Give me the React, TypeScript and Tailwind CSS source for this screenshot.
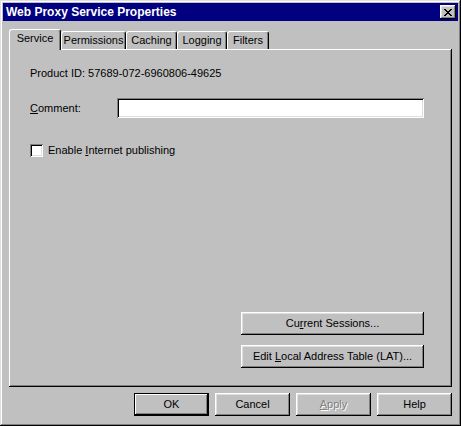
import React, { useState } from 'react';

const raised =
  'shadow-[inset_-1px_-1px_#000,inset_1px_1px_#fff,inset_-2px_-2px_#808080,inset_2px_2px_#dfdfdf]';

const tabs = [
  { id: 'service', label: 'Service', width: 'w-[52px]' },
  { id: 'permissions', label: 'Permissions', width: 'w-[65px]' },
  { id: 'caching', label: 'Caching', width: 'w-[51px]' },
  { id: 'logging', label: 'Logging', width: 'w-[50px]' },
  { id: 'filters', label: 'Filters', width: 'w-[42px]' },
];

function Button({
  children,
  className = '',
  isDefault = false,
  disabled = false,
}: {
  children: React.ReactNode;
  className?: string;
  isDefault?: boolean;
  disabled?: boolean;
}) {
  return (
    <button
      className={`flex h-[23px] items-center justify-center bg-[#c0c0c0] text-[11px] ${
        isDefault
          ? 'shadow-[inset_0_0_0_1px_#000,inset_-2px_-2px_#000,inset_2px_2px_#fff,inset_-3px_-3px_#808080]'
          : raised
      } ${disabled ? 'text-[#808080] [text-shadow:1px_1px_#fff]' : 'text-black'} ${className}`}
    >
      <span className="whitespace-pre">{children}</span>
    </button>
  );
}

export default function App() {
  const [active, setActive] = useState('service');
  const [internet, setInternet] = useState(false);

  return (
    <div
      className="flex h-[426px] w-[461px] flex-col bg-[#c0c0c0] p-[3px] text-[11px] text-black shadow-[inset_-1px_-1px_#000,inset_1px_1px_#dfdfdf,inset_-2px_-2px_#808080,inset_2px_2px_#fff]"
      style={{ fontFamily: '"Liberation Sans", Arial, sans-serif' }}
    >
      {/* Title bar */}
      <div className="flex h-[18px] items-center justify-between bg-[#000080] pl-[3px] pr-[2px]">
        <span className="text-[12px] font-bold text-white">Web Proxy Service Properties</span>
        <button className={`flex h-[14px] w-[16px] items-center justify-center bg-[#c0c0c0] ${raised}`}>
          <svg width="8" height="7" viewBox="0 0 8 7" shapeRendering="crispEdges">
            <path
              d="M0 0h2v1H0zM6 0h2v1H6zM1 1h2v1H1zM5 1h2v1H5zM2 2h4v1H2zM3 3h2v1H3zM2 4h4v1H2zM1 5h2v1H1zM5 5h2v1H5zM0 6h2v1H0zM6 6h2v1H6z"
              fill="#000"
            />
          </svg>
        </button>
      </div>

      {/* Tabs */}
      <div className="mt-[8px] flex h-[20px] items-end pl-[6px]">
        {tabs.map((tab) => {
          const selected = tab.id === active;
          return (
            <button
              key={tab.id}
              onClick={() => setActive(tab.id)}
              className={`relative flex items-start justify-center rounded-t-[3px] border-l border-t border-r border-white border-r-black bg-[#c0c0c0] shadow-[inset_-1px_0_#808080] ${tab.width} ${
                selected ? 'z-10 -mb-px h-[21px] pt-[2px]' : 'h-[18px] pt-[2px]'
              }`}
            >
              <span className="leading-[13px]">{tab.label}</span>
            </button>
          );
        })}
      </div>

      {/* Tab panel */}
      <div className="mx-[6px] flex h-[338px] flex-col pb-[19px] pl-[21px] pr-[28px] shadow-[inset_-1px_-1px_#000,inset_1px_1px_#fff,inset_-2px_-2px_#808080]">
        <div className="mt-[18px] h-[13px] leading-[13px]">Product ID: 57689-072-6960806-49625</div>

        <div className="mt-[18px] flex h-[20px] items-center">
          <label className="w-[87px] leading-[13px]">
            <span className="underline">C</span>omment:
          </label>
          <input
            className="h-[20px] w-[307px] bg-white px-[3px] text-[11px] outline-none shadow-[inset_1px_1px_#808080,inset_-1px_-1px_#fff,inset_2px_2px_#000,inset_-2px_-2px_#dfdfdf]"
          />
        </div>

        <label className="mt-[26px] flex h-[13px] items-center" onClick={() => setInternet(!internet)}>
          <span className="flex h-[13px] w-[13px] items-center justify-center bg-white shadow-[inset_1px_1px_#808080,inset_-1px_-1px_#fff,inset_2px_2px_#000,inset_-2px_-2px_#dfdfdf]">
            {internet && (
              <svg width="7" height="7" viewBox="0 0 7 7">
                <path d="M0 3l2 2 5-5v2l-5 5-2-2z" fill="#000" />
              </svg>
            )}
          </span>
          <span className="ml-[5px] leading-[13px]">
            Enable <span className="underline">I</span>nternet publishing
          </span>
        </label>

        <div className="flex-1" />

        <div className="flex flex-col items-end gap-[10px]">
          <Button className="w-[183px]">
            Cu<span className="underline">r</span>rent Sessions...
          </Button>
          <Button className="w-[183px]">
            Edit <span className="underline">L</span>ocal Address Table (LAT)...
          </Button>
        </div>
      </div>

      {/* Dialog buttons */}
      <div className="mt-[6px] flex justify-end gap-[6px] pr-[6px]">
        <Button className="w-[75px]" isDefault>
          OK
        </Button>
        <Button className="w-[75px]">Cancel</Button>
        <Button className="w-[75px]" disabled>
          <span className="underline">A</span>pply
        </Button>
        <Button className="w-[75px]">Help</Button>
      </div>
    </div>
  );
}
